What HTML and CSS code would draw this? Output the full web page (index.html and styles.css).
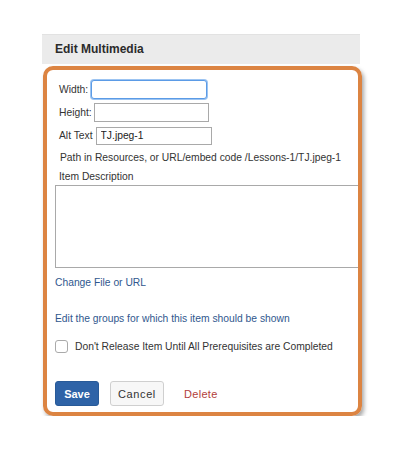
FILE: index.html
```html
<!DOCTYPE html>
<html>
<head>
<meta charset="utf-8">
<link rel="stylesheet" href="styles.css">
</head>
<body>
<div class="page">
  <div class="header">Edit Multimedia</div>
  <div class="box">
    <div class="field"><label>Width:</label><input class="inp w focus" type="text"></div>
    <div class="field"><label>Height:</label><input class="inp h" type="text"></div>
    <div class="field"><label>Alt Text</label><input class="inp a" type="text" value="TJ.jpeg-1"></div>
    <div class="path">Path in Resources, or URL/embed code /Lessons-1/TJ.jpeg-1</div>
    <div class="desc-label">Item Description</div>
    <textarea class="desc"></textarea>
    <a class="link change">Change File or URL</a>
    <a class="link groups">Edit the groups for which this item should be shown</a>
    <div class="check-row"><span class="checkbox"></span><span>Don't Release Item Until All Prerequisites are Completed</span></div>
    <div class="actions">
      <button class="btn save">Save</button>
      <button class="btn cancel">Cancel</button>
      <a class="delete">Delete</a>
    </div>
  </div>
</div>
</body>
</html>
```
FILE: styles.css
```css
* { box-sizing: border-box; }
html, body { margin: 0; padding: 0; background: #fff; }
body { font-family: "Liberation Sans", Arial, sans-serif; font-size: 10.3px; color: #333; }
.page { padding: 34px 0 0 42px; width: 362px; }
.header {
  height: 30px; background: #ebebeb; border-top: 1px solid #e2e2e2;
  font-weight: bold; font-size: 12px; color: #2b2b2b;
  padding-left: 13px; line-height: 29px; width: 318px;
}
.box {
  margin: 2px 0 0 1px; width: 319px;
  border: 4px solid #dc8442; border-radius: 10px;
  box-shadow: 2px 3px 4px rgba(0,0,0,0.35);
  padding: 10px 0 6px 8px;
  display: flex; flex-direction: column; align-items: flex-start;
  overflow: hidden;
}
.field { display: flex; align-items: center; height: 19px; margin-left: 4px; margin-bottom: 4px; }
.field label { margin-right: 1px; }
.inp { height: 19px; border: 1px solid #a9a9a9; padding: 0 4px; font: inherit; color: #222; outline: none; }
.inp.w { width: 116px; margin-left: 2px; }
.inp.h { width: 115px; margin-left: 1px; }
.inp.a { width: 116px; margin-left: 2px; height: 18px; }
.inp.focus { border: 1px solid #5b9be6; border-radius: 3px; box-shadow: 0 0 0 1px #9cc4f2; }
.path { margin: 2px 0 0 5px; line-height: 14px; white-space: nowrap; }
.desc-label { margin: 5px 0 0 4px; line-height: 14px; }
.desc { margin-top: 1px; width: 310px; height: 83px; border: 1px solid #a9a9a9; resize: none; }
.link { color: #30578e; line-height: 14px; }
.change { margin-top: 8px; }
.groups { margin-top: 22px; }
.check-row { display: flex; align-items: center; margin-top: 13px; height: 14px; white-space: nowrap; }
.checkbox { width: 13px; height: 13px; border: 1px solid #aaa; border-radius: 3px; margin-right: 7px; background: #fff; }
.actions { display: flex; align-items: center; margin-top: 28px; }
.btn { height: 25px; border-radius: 3px; font-family: inherit; font-size: 11px; padding: 0; }
.save { width: 44px; background: #2e63a7; border: 1px solid #285a98; color: #fff; font-weight: bold; }
.cancel { width: 54px; margin-left: 11px; background: #f7f7f7; border: 1px solid #cfcfcf; color: #333; letter-spacing: 0.6px; }
.delete { margin-left: 20px; color: #b2403b; letter-spacing: 0.3px; font-size: 11px; }
```
